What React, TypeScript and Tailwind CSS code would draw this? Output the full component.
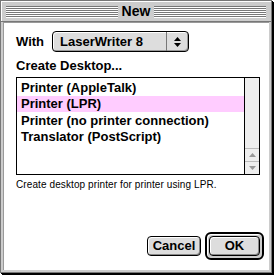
const font = "font-['Liberation_Sans',Arial,sans-serif]";

function Stripes() {
  return (
    <div className="flex-1 flex flex-col gap-px">
      {[0, 1, 2, 3, 4, 5].map((i) => (
        <div key={i} className="h-px bg-[#777] shadow-[0_1px_0_#fff]" />
      ))}
    </div>
  );
}

function MacButton({ label, def }: { label: string; def?: boolean }) {
  const btn = (
    <div className="h-[20px] flex items-center justify-center rounded-[4px] border border-black bg-[#ddd] shadow-[inset_1px_1px_0_#fff,inset_-1px_-1px_0_#888] text-[13px] font-bold text-black">
      {label}
    </div>
  );
  if (!def) return <div className="w-[54px]">{btn}</div>;
  return (
    <div className="w-[59px] p-[2px] rounded-[6px] border-2 border-black bg-[#ccc] shadow-[inset_1px_1px_0_#fff]">
      {btn}
    </div>
  );
}

export default function App() {
  const rows = [
    "Printer (AppleTalk)",
    "Printer (LPR)",
    "Printer (no printer connection)",
    "Translator (PostScript)",
  ];
  return (
    <div className={`w-[274px] h-[275px] bg-white ${font}`}>
      <div className="w-[272px] h-[273px] border border-[#777] bg-[#ccc] shadow-[1px_1px_0_#000,2px_2px_0_#000] flex flex-col">
        {/* title bar */}
        <div className="h-[21px] flex items-center gap-[4px] px-[5px] bg-[#ccc] border-b border-[#777] shadow-[inset_1px_1px_0_#fff]">
          <Stripes />
          <span className="text-[14px] font-bold text-black leading-none">New</span>
          <Stripes />
        </div>

        {/* body */}
        <div className="flex-1 mx-[2px] mb-[2px] bg-white border-t border-l border-[#999] flex flex-col pl-[12px] pr-[12px]">
          <div className="flex items-center mt-[8px] h-[21px]">
            <span className="text-[13px] font-bold text-black w-[36px]">With</span>
            <div className="w-[137px] h-[21px] flex rounded-[4px] border border-black bg-[#ddd] shadow-[inset_1px_1px_0_#fff,inset_-1px_-1px_0_#999]">
              <span className="flex-1 flex items-center pl-[7px] text-[13px] font-bold text-black">LaserWriter 8</span>
              <div className="w-[22px] border-l border-[#777] flex flex-col items-center justify-center gap-[2px]">
                <svg width="7" height="4" viewBox="0 0 7 4"><path d="M3.5 0L7 4H0z" fill="#000" /></svg>
                <svg width="7" height="4" viewBox="0 0 7 4"><path d="M0 0h7L3.5 4z" fill="#000" /></svg>
              </div>
            </div>
          </div>

          <div className="mt-[6px] text-[13px] font-bold text-black leading-[16px]">Create Desktop...</div>

          <div className="mt-[3px] w-[244px] h-[98px] border border-black flex">
            <div className="flex-1 flex flex-col pt-[1px]">
              {rows.map((r, i) => (
                <div
                  key={r}
                  className={`h-[16.5px] flex items-center pl-[4px] text-[13px] font-bold text-black ${i === 1 ? "bg-[#ffccff]" : ""}`}
                >
                  {r}
                </div>
              ))}
            </div>
            <div className="w-[15px] border-l border-black bg-[#eee] flex flex-col justify-end">
              <div className="h-[13px] flex items-center justify-center border-t border-[#bbb]">
                <svg width="7" height="4" viewBox="0 0 7 4"><path d="M3.5 0L7 4H0z" fill="#999" /></svg>
              </div>
              <div className="h-[13px] flex items-center justify-center border-t border-[#bbb]">
                <svg width="7" height="4" viewBox="0 0 7 4"><path d="M0 0h7L3.5 4z" fill="#999" /></svg>
              </div>
            </div>
          </div>

          <div className="mt-[3px] text-[10px] tracking-[0.1px] text-black leading-[13px]">
            Create desktop printer for printer using LPR.
          </div>

          <div className="flex-1 flex items-end justify-end gap-[4px] pb-[10px] -mr-[7px]">
            <div className="mb-[4px]">
              <MacButton label="Cancel" />
            </div>
            <MacButton label="OK" def />
          </div>
        </div>
      </div>
    </div>
  );
}
